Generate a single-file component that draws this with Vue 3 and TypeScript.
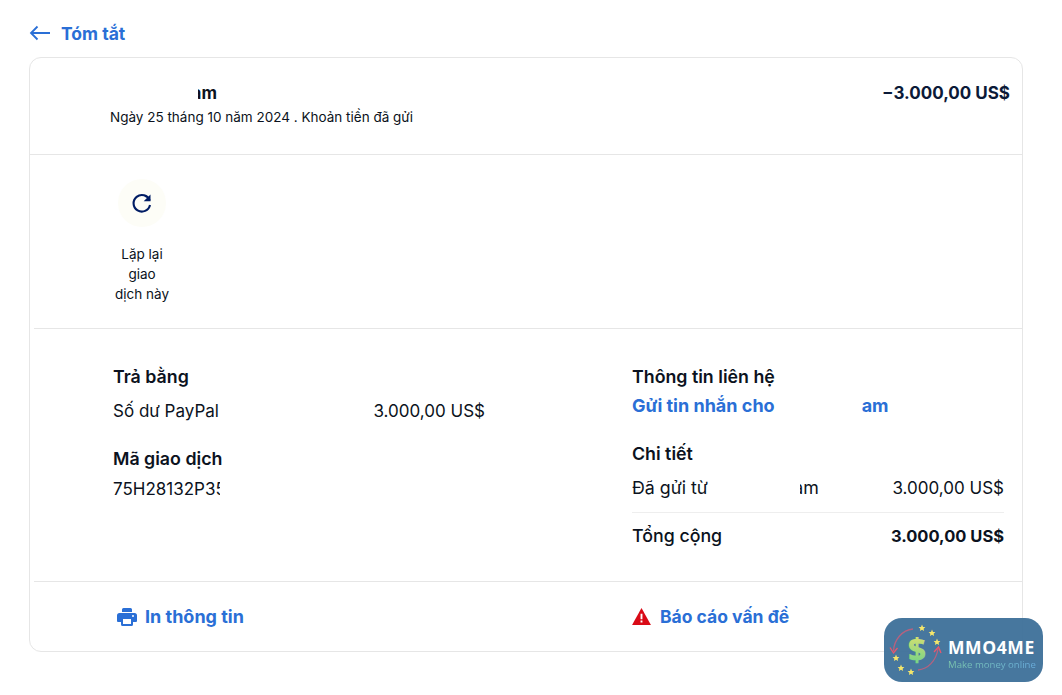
<template>
  <main class="page">
    <a class="back">
      <svg class="back-icon" viewBox="0 0 22 16" width="22" height="16">
        <path d="M21 8H2M8.500 1.500 2 8l6.500 6.500" fill="none" stroke="currentColor" stroke-width="1.800" />
      </svg>
      <span>Tóm tắt</span>
    </a>

    <section class="card">
      <header class="summary">
        <div class="summary-main">
          <div class="name"><span class="clip-left name-clip">am</span></div>
          <div class="date">Ngày 25 tháng 10 năm 2024 . Khoản tiền đã gửi</div>
        </div>
        <div class="total">−3.000,00 US$</div>
      </header>

      <div class="actions">
        <button class="action">
          <span class="action-circle">
            <svg viewBox="0 0 24 24" width="24" height="24">
              <path d="M19.700 9.500A8.300 8.300 0 1 0 20 14" fill="none" stroke="#001c64" stroke-width="2.100" />
              <path d="M20.500 3.500v6.800h-6.800z" fill="#001c64" />
            </svg>
          </span>
          <span class="action-label">Lặp lại giao dịch này</span>
        </button>
      </div>

      <div class="details">
        <div class="col col-left">
          <h3>Trả bằng</h3>
          <div class="row pay-row">
            <span>Số dư PayPal</span>
            <span>3.000,00 US$</span>
          </div>
          <h3 class="code-title">Mã giao dịch</h3>
          <div class="code">75H28132P35</div>
        </div>
        <div class="col col-right">
          <h3>Thông tin liên hệ</h3>
          <div class="message">
            <span>Gửi tin nhắn cho</span>
            <span class="message-end">am</span>
          </div>
          <h3 class="detail-title">Chi tiết</h3>
          <div class="row sent-row">
            <span class="sent">
              <span>Đã gửi từ</span>
              <span class="clip-left sent-clip">am</span>
            </span>
            <span>3.000,00 US$</span>
          </div>
          <div class="row total-row">
            <span>Tổng cộng</span>
            <strong>3.000,00 US$</strong>
          </div>
        </div>
      </div>

      <footer class="links">
        <a class="link print">
          <svg viewBox="0 0 20 18" width="20" height="18">
            <path fill="#2a6fd6" fill-rule="evenodd" d="M5 1.500A1.500 1.500 0 0 1 6.500 0h7A1.500 1.500 0 0 1 15 1.500V4H5zM2.500 5h15A2.500 2.500 0 0 1 20 7.500V13a1 1 0 0 1-1 1h-3v2.500a1.500 1.500 0 0 1-1.500 1.500h-9A1.500 1.500 0 0 1 4 16.500V14H1a1 1 0 0 1-1-1V7.500A2.500 2.500 0 0 1 2.500 5zM6 11v5h8v-5zm10-4a1 1 0 1 0 0 2 1 1 0 0 0 0-2z" />
          </svg>
          <span>In thông tin</span>
        </a>
        <a class="link report">
          <svg viewBox="0 0 20 18" width="19" height="17">
            <path fill="#d90a16" d="M10 0 20 18H0z" />
            <path fill="#fff" d="M9 6h2v6H9zM9 13.300h2v2H9z" />
          </svg>
          <span>Báo cáo vấn đề</span>
        </a>
      </footer>
    </section>

    <aside class="badge">
      <svg class="badge-mark" viewBox="0 0 60 60" width="60" height="60">
        <defs>
          <linearGradient id="dollarFill" x1="0" y1="0" x2="0" y2="1">
            <stop offset="0" stop-color="#f0e36a" />
            <stop offset="1" stop-color="#5fd08c" />
          </linearGradient>
        </defs>
        <path d="M25 9C14 10 6 20 5.500 31" fill="none" stroke="#b5627f" stroke-width="1.300" />
        <path d="M2 27.500 5.500 33l4-5" fill="none" stroke="#e9566d" stroke-width="1.300" />
        <path d="M30 50c10-1 18-9 20-21" fill="none" stroke="#b5627f" stroke-width="1.300" />
        <path d="M46 32l4.500-5 2.500 6" fill="none" stroke="#e9566d" stroke-width="1.300" />
        <text x="29" y="41" text-anchor="middle" class="dollar" fill="url(#dollarFill)">$</text>
        <path
          v-for="s in stars"
          :key="s[0]"
          :d="starPath"
          :transform="`translate(${s[0]} ${s[1]})`"
          fill="#f5e66b"
        />
      </svg>
      <div class="badge-text">
        <div class="badge-title">MMO4ME</div>
        <div class="badge-sub">Make money online</div>
      </div>
    </aside>
  </main>
</template>

<script setup lang="ts">
const stars: [number, number][] = [
  [34, 8],
  [44, 13],
  [49, 22],
  [8, 38],
  [13, 48],
  [23, 52],
]

const starPath = 'M0-3.400 1 -1.100 3.400-.9 1.600.7 2.100 3 0 1.800-2.100 3-1.600.7-3.400-.9-1-1.100z'
</script>

<style>
html,
body {
  background: #fff;
}
</style>

<style scoped>
.page {
  position: relative;
  width: 1062px;
  height: 695px;
  padding: 20px 39px 0 29px;
  box-sizing: border-box;
  overflow: hidden;
  font-family: Inter, "Liberation Sans", sans-serif;
  color: #0b1220;
}

.back {
  display: flex;
  align-items: center;
  gap: 10px;
  height: 26px;
  margin-bottom: 11px;
  color: #2a6fd6;
  font-size: 17.500px;
  font-weight: 700;
}

.back-icon {
  flex: none;
}

.card {
  height: 595px;
  border: 1px solid #e6e6e6;
  border-radius: 12px;
  box-sizing: border-box;
  display: flex;
  flex-direction: column;
}

.summary {
  height: 97px;
  flex: none;
  display: flex;
  justify-content: space-between;
  padding: 25px 12px 0 80px;
  box-sizing: border-box;
  border-bottom: 1px solid #e6e6e6;
}

.name {
  height: 21px;
  padding-left: 88px;
  font-size: 17px;
  font-weight: 700;
  line-height: 21px;
}

.clip-left {
  display: inline-flex;
  justify-content: flex-end;
  overflow: hidden;
}

.name-clip {
  width: 19px;
}

.date {
  margin-top: 3px;
  font-size: 13.500px;
  line-height: 20px;
  white-space: nowrap;
}

.total {
  font-size: 17px;
  font-weight: 700;
  line-height: 21px;
  color: #0b1a38;
}

.actions {
  height: 173px;
  flex: none;
  padding: 24px 0 0 84px;
  box-sizing: border-box;
}

.action {
  width: 56px;
  padding: 0;
  border: 0;
  background: none;
  display: flex;
  flex-direction: column;
  align-items: center;
  font: inherit;
  color: inherit;
}

.action-circle {
  flex: none;
  width: 48px;
  height: 48px;
  border-radius: 50%;
  background: #fdfdf7;
  display: flex;
  align-items: center;
  justify-content: center;
}

.action-label {
  margin-top: 17px;
  font-size: 13.500px;
  line-height: 20px;
  text-align: center;
}

.details {
  margin-left: 4px;
  height: 254px;
  flex: none;
  border-top: 1px solid #e6e6e6;
  border-bottom: 1px solid #e6e6e6;
  box-sizing: border-box;
  display: flex;
  padding: 36px 18px 0 79px;
}

.col-left {
  width: 372px;
}

.col-right {
  width: 372px;
  margin-left: 147px;
}

h3 {
  margin: 0;
  font-size: 17.800px;
  font-weight: 600;
  line-height: 24px;
  white-space: nowrap;
}

.row {
  display: flex;
  justify-content: space-between;
  font-size: 17px;
  line-height: 24px;
}

.pay-row {
  margin-top: 10px;
}

.code-title {
  margin-top: 24px;
}

.code {
  margin-top: 6px;
  width: 107px;
  overflow: hidden;
  font-size: 17px;
  line-height: 24px;
  white-space: nowrap;
}

.message {
  display: flex;
  height: 24px;
  margin-top: 5px;
  color: #2a6fd6;
  font-size: 18px;
  font-weight: 700;
  line-height: 24px;
}

.message-end {
  margin-left: 87px;
}

.detail-title {
  margin-top: 24px;
}

.sent-row {
  margin-top: 10px;
  padding-bottom: 12px;
  border-bottom: 1px solid #eee;
}

.sent {
  display: flex;
  font-size: 17.800px;
}

.sent-clip {
  width: 19px;
  margin-left: 92px;
}

.total-row {
  margin-top: 11px;
}

.total-row span {
  font-size: 17.800px;
  font-weight: 500;
}

.total-row strong {
  font-size: 16.500px;
  font-weight: 700;
}

.links {
  flex: 1;
  display: flex;
  align-items: center;
  padding-left: 87px;
}

.link {
  display: flex;
  align-items: center;
  gap: 8px;
  color: #2a6fd6;
  font-size: 18px;
  font-weight: 700;
}

.print {
  width: 515px;
}

.report {
  gap: 9px;
  font-size: 17.500px;
}

.badge {
  position: absolute;
  left: 884px;
  top: 618px;
  width: 159px;
  height: 64px;
  border-radius: 18px;
  background: rgba(61, 112, 153, 0.95);
  display: flex;
  align-items: center;
  padding-left: 4px;
  box-sizing: border-box;
}

.badge-mark {
  flex: none;
}

.dollar {
  font-family: "Open Sans", sans-serif;
  font-size: 31px;
  font-weight: 800;
}

.badge-text {
  display: flex;
  flex-direction: column;
  margin-top: 8px;
}

.badge-title {
  color: #fff;
  font-family: "Open Sans", sans-serif;
  font-size: 17.500px;
  font-weight: 700;
  line-height: 21px;
  letter-spacing: 0.6px;
}

.badge-sub {
  font-family: "Open Sans", sans-serif;
  font-size: 9.600px;
  line-height: 14px;
  white-space: nowrap;
  background: linear-gradient(90deg, #7cc8ac, #6aaede);
  -webkit-background-clip: text;
  background-clip: text;
  color: transparent;
}
</style>
